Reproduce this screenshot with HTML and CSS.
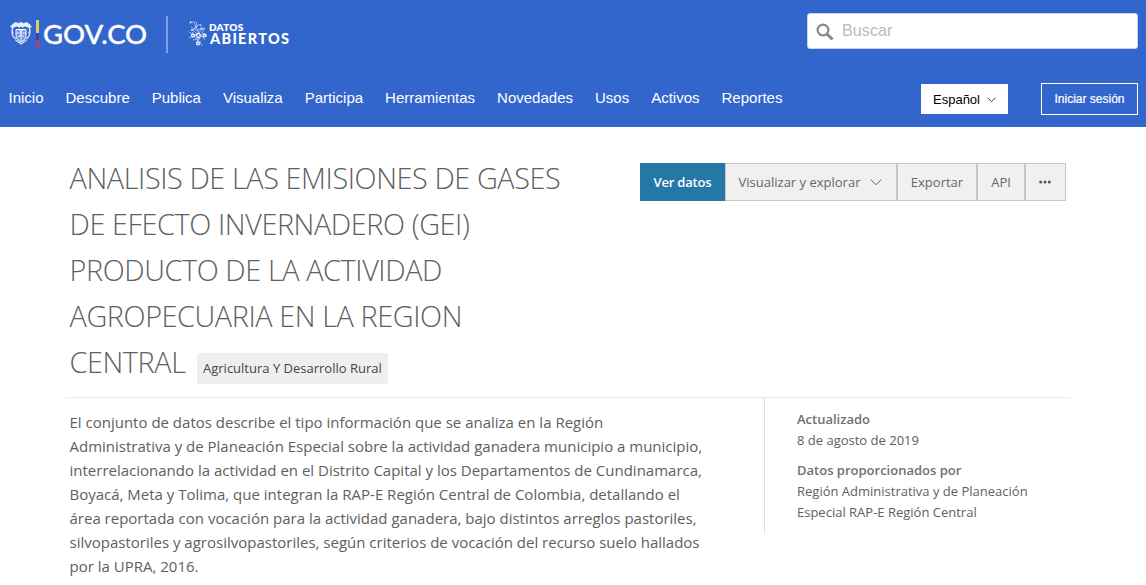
FILE: index.html
```html
<!DOCTYPE html>
<html lang="es">
<head>
<meta charset="utf-8">
<title>Datos Abiertos</title>
<link rel="stylesheet" href="styles.css">
</head>
<body>
<header class="header">
  <div class="brand-row">
    <div class="brand">
      <svg class="crest" width="22" height="24" viewBox="0 0 22 24" fill="none" stroke="#fff">
        <path d="M2 4 5 1.500 9 2.500 11 1 13 2.500 17 1.500 20 4 21.500 6 19 6.500 15 5 12.500 6.500 11 5 9.500 6.500 7 5 3 6.500 .5 6Z" fill="#e8f0fd" stroke-width=".6"/>
        <path d="M6 8.500h10v6c0 3.500-2.500 5-5 6.500-2.500-1.500-5-3-5-6.500z" fill="#6d95e2" stroke-width="1"/>
        <path d="M6.500 12h9M11 8v13" stroke-width=".8"/>
        <path d="m8.500 8.500 2.500 2 2.500-2M8 16l3-2 3 2" stroke-width=".9"/>
        <path d="M3 6c-1.500 3-1 5 0 7M2 10c0 4 2 7 4 8M19 6c1.500 3 1 5 0 7M20 10c0 4-2 7-4 8M5.500 19l5.500 4 5.500-4" stroke-width="1.300" opacity=".85"/>
      </svg>
      <span class="flag"></span>
      <span class="gov">GOV.CO</span>
      <span class="divider"></span>
      <svg class="network" width="21" height="28" viewBox="0 0 21 28" fill="none" stroke="#b9cff8" stroke-width=".75">
        <path d="M2 2h4l2 5-3 3 4 4-6 2M8 1l1 5 4-2v5l4-1-3 5 5 2M3 7l5 3 5-1-2 5M1 12l5 3 5-1 4 2h4M1 18l4-2 5 3 4-3M5 20l4-1v6l3-4 2 5M10 10v12M14 17l3 3M4 12l4 4M7 7l5 7M12 18l-3 4"/>
        <g fill="#3366cc" stroke="#fff" stroke-width="1.200"><circle cx="5" cy="15.500" r="1.400"/><circle cx="10.500" cy="15.500" r="1.800"/><circle cx="16.500" cy="15.500" r="1.400"/><circle cx="10" cy="23.500" r="1.400"/></g>
        <g fill="#dce8ff" stroke="none"><circle cx="2.500" cy="2.500" r="1"/><circle cx="8" cy="7" r="1"/><circle cx="14" cy="9" r="1"/><circle cx="4" cy="10" r="1"/></g>
      </svg>
      <span class="open-data"><span class="od-small">DATOS</span><span class="od-big">ABIERTOS</span></span>
    </div>
    <div class="search">
      <svg width="18" height="18" viewBox="0 0 18 18" fill="none" stroke="#888"><circle cx="7" cy="7" r="5.400" stroke-width="2.200"/><path d="m11 11 5.500 5.500" stroke-width="3"/></svg>
      <span>Buscar</span>
    </div>
  </div>
  <div class="nav-row">
    <nav class="nav"><a>Inicio</a><a>Descubre</a><a>Publica</a><a>Visualiza</a><a>Participa</a><a>Herramientas</a><a>Novedades</a><a>Usos</a><a>Activos</a><a>Reportes</a></nav>
    <div class="account">
      <div class="language"><span>Español</span><svg width="9" height="6" viewBox="0 0 9 6" fill="none" stroke="#444"><path d="m.5.700 4 4 4-4"/></svg></div>
      <div class="login">Iniciar sesión</div>
    </div>
  </div>
</header>
<main class="page">
  <section class="heading">
    <h1 class="title">ANALISIS DE LAS EMISIONES DE GASES<br>DE EFECTO INVERNADERO (GEI)<br>PRODUCTO DE LA ACTIVIDAD<br>AGROPECUARIA EN LA REGION<br>CENTRAL<span class="category">Agricultura Y Desarrollo Rural</span></h1>
    <div class="actions">
      <div class="action primary">Ver datos</div>
      <div class="action explore">Visualizar y explorar<svg width="12" height="7" viewBox="0 0 12 7" fill="none" stroke="#666"><path d="m.7.700 5.300 5 5.300-5"/></svg></div>
      <div class="action export">Exportar</div>
      <div class="action api">API</div>
      <div class="action more"><svg width="12" height="4" viewBox="0 0 12 4" fill="#555"><circle cx="1.700" cy="2" r="1.500"/><circle cx="6" cy="2" r="1.500"/><circle cx="10.300" cy="2" r="1.500"/></svg></div>
    </div>
  </section>
  <div class="rule"></div>
  <section class="details">
    <p class="description">El conjunto de datos describe el tipo información que se analiza en la Región<br>Administrativa y de Planeación Especial sobre la actividad ganadera municipio a municipio,<br>interrelacionando la actividad en el Distrito Capital y los Departamentos de Cundinamarca,<br>Boyacá, Meta y Tolima, que integran la RAP-E Región Central de Colombia, detallando el<br>área reportada con vocación para la actividad ganadera, bajo distintos arreglos pastoriles,<br>silvopastoriles y agrosilvopastoriles, según criterios de vocación del recurso suelo hallados<br>por la UPRA, 2016.</p>
    <dl class="meta">
      <dt>Actualizado</dt><dd>8 de agosto de 2019</dd>
      <dt>Datos proporcionados por</dt><dd>Región Administrativa y de Planeación<br>Especial RAP-E Región Central</dd>
    </dl>
  </section>
</main>
</body>
</html>
```
FILE: styles.css
```css
* { box-sizing: border-box; }
body { margin: 0; height: 585px; overflow: hidden; background: #fff; color: #606060; font-family: "Open Sans", sans-serif; }
svg { display: block; flex: none; }
.header { height: 127px; background: #3366cc; color: #fff; font-family: "Liberation Sans", Arial, sans-serif; }
.brand-row { display: flex; justify-content: space-between; height: 68px; padding: 13px 8px 0 10px; }
.brand { display: flex; align-items: flex-start; white-space: nowrap; }
.crest { margin-top: 8px; }
.flag { width: 3px; height: 28px; margin: 7px 0 0 4px; background: linear-gradient(#e3c765 0 45%, #254fa8 45% 73%, #b63b70 73%); }
.gov { width: 123px; margin-left: 4px; padding-top: 4px; font: 500 27.500px/34px Lato, sans-serif; letter-spacing: 0; -webkit-text-stroke: .3px #fff; }
.divider { width: 2px; height: 37px; margin-top: 3px; margin-left: 0; background: #7ca0e7; }
.network { margin: 7px 0 0 20px; }
.open-data { display: flex; flex-direction: column; margin-top: 9px; font-family: Lato, sans-serif; font-weight: 900; }
.od-small { font-size: 10px; line-height: 11px; font-weight: 800; letter-spacing: .2px; }
.od-big { padding-left: 1px; font-size: 14.500px; line-height: 12px; letter-spacing: 1.300px; }
.search { display: flex; width: 331px; height: 36px; padding: 9px 8px; gap: 8px; border: 1px solid #c5d4ed; border-radius: 3px; background: #fff; color: #bbb; font-size: 16.200px; line-height: 15px; }
.nav-row { display: flex; justify-content: space-between; padding: 15px 8px 0 8.500px; }
.nav { display: flex; gap: 22px; padding-top: 6px; font-size: 15px; line-height: 18px; white-space: nowrap; }
.account { display: flex; gap: 33px; }
.language { display: flex; align-items: center; justify-content: center; gap: 7px; width: 87px; height: 30px; margin-top: 1px; background: #fff; color: #000; font-size: 13px; }
.language svg { margin-top: 2px; }
.login { width: 97px; height: 32px; border: 1px solid #fff; font-size: 12px; line-height: 30px; text-align: center; -webkit-text-stroke: .2px #fff; }
.page { padding: 28px 59px 0; }
.heading { display: flex; align-items: flex-start; justify-content: space-between; height: 242px; padding: 0 21px 0 10.500px; }
.title { margin: 0; font-size: 28.800px; line-height: 46px; font-weight: 300; letter-spacing: -.4px; white-space: nowrap; }
.category { display: inline-block; height: 31px; margin-left: 11.500px; padding: 0 6px; background: #efefef; color: #444; font-size: 13px; line-height: 31px; font-weight: 400; letter-spacing: 0; }
.actions { display: flex; height: 38px; margin-top: 8px; font-size: 13px; }
.action { display: flex; align-items: center; justify-content: center; border: 1px solid #c6c6c6; background: #f0f0f0; color: #666; white-space: nowrap; }
.primary { width: 85px; border-color: #2478a5; background: #2478a5; color: #fff; font-weight: 600; letter-spacing: -.2px; }
.explore { width: 172px; gap: 10px; padding-right: 1px; }
.export { width: 80px; }
.api { width: 48px; }
.more { width: 41px; padding-right: 2px; }
.rule { width: 1018px; height: 1px; background: linear-gradient(90deg, #fff, #e8e8e8 1.500%, #e8e8e8 98.500%, #fff); }
.details { display: flex; align-items: flex-start; padding-left: 10.500px; }
.description { width: 694.500px; margin: 0; padding-top: 12px; font-size: 15px; line-height: 24px; white-space: nowrap; }
.meta { width: 300px; height: 135px; margin: 0; padding: 11px 0 0 32px; border-left: 1px solid #ddd; font-size: 13px; line-height: 21px; }
.meta dt { font-weight: 600; color: #707070; }
.meta dd { margin: 0 0 9px; }
```
